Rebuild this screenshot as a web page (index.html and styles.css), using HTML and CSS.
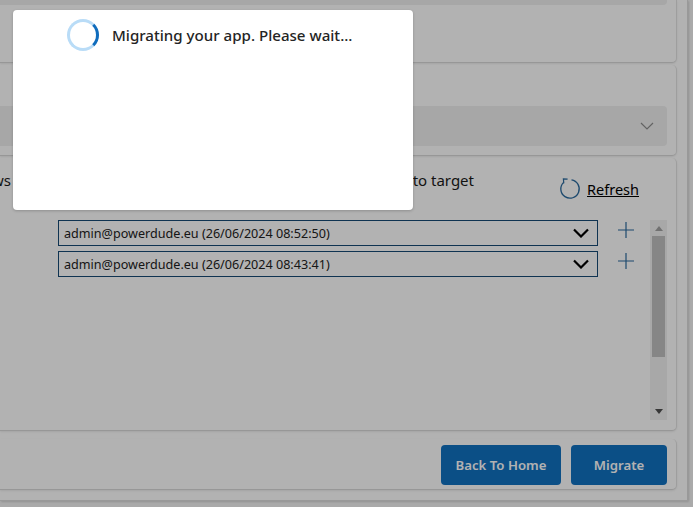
FILE: index.html
```html
<!DOCTYPE html>
<html lang="en">
<head>
    <meta charset="UTF-8">
    <meta name="viewport" content="width=device-width, initial-scale=1.0">
    <title>Migrate App</title>
    <link rel="stylesheet" href="styles.css">
</head>
<body>
    <div class="panel">
        <div class="card card-top">
            <div class="field field-top"></div>
        </div>
        <div class="card card-env">
            <div class="field field-env">
                <svg class="chevron-sm" width="14" height="8" viewBox="0 0 14 8"><path d="M1 1l6 6 6-6" fill="none" stroke="#8f8f8f" stroke-width="1.2"/></svg>
            </div>
        </div>
        <div class="card card-owners">
            <div class="owners-head">
                <div class="owners-note">
                    <span class="note-start">ws</span>
                    <span class="note-end">to target</span>
                </div>
                <a class="refresh" href="#">
                    <svg width="22" height="22" viewBox="0 0 22 22"><path d="M4.6 4.4A9.2 9.2 0 1 0 12.5 1.9" fill="none" stroke="#2a6a9e" stroke-width="1.3"/><path d="M8.6 1.2L4.4 .8 4.8 5.4" fill="none" stroke="#2a6a9e" stroke-width="1.2"/></svg>
                    <span>Refresh</span>
                </a>
            </div>
            <div class="owners-body">
                <div class="owners-list">
                    <div class="owner-row">
                        <div class="owner-select">
                            <span>admin@powerdude.eu (26/06/2024 08:52:50)</span>
                            <svg width="16" height="10" viewBox="0 0 16 10"><path d="M1 1.5l7 7 7-7" fill="none" stroke="#000" stroke-width="2.2"/></svg>
                        </div>
                        <svg class="plus" width="16" height="16" viewBox="0 0 16 16"><path d="M8 0v16M0 8h16" stroke="#2a6a9e" stroke-width="1.2"/></svg>
                    </div>
                    <div class="owner-row">
                        <div class="owner-select">
                            <span>admin@powerdude.eu (26/06/2024 08:43:41)</span>
                            <svg width="16" height="10" viewBox="0 0 16 10"><path d="M1 1.5l7 7 7-7" fill="none" stroke="#000" stroke-width="2.2"/></svg>
                        </div>
                        <svg class="plus" width="16" height="16" viewBox="0 0 16 16"><path d="M8 0v16M0 8h16" stroke="#2a6a9e" stroke-width="1.2"/></svg>
                    </div>
                </div>
                <div class="scrollbar">
                    <div class="arrow-up"></div>
                    <div class="thumb"></div>
                    <div class="arrow-down"></div>
                </div>
            </div>
        </div>
        <div class="card card-actions">
            <button class="btn btn-home">Back To Home</button>
            <button class="btn btn-migrate">Migrate</button>
        </div>
    </div>

    <div class="overlay"></div>
    <div class="modal">
        <div class="spinner"></div>
        <span class="modal-text">Migrating your app. Please wait...</span>
    </div>
</body>
</html>
```

FILE: styles.css
```css
/* Page behind the dialog */
html, body {
    height: 100%;
}
body {
    margin: 0;
    overflow: hidden;
    background-color: #f4f4f4;
    font-family: "Noto Sans", Arial, sans-serif;
    color: #1a1a1a;
}
.panel {
    box-sizing: border-box;
    width: 688px;
    height: 501px;
    padding-right: 10px;
    background: #fff;
    border-right: 1px solid #dcdcdc;
    border-bottom: 1px solid #dcdcdc;
    box-shadow: 1px 1px 2px rgba(0,0,0,0.15);
}
.card {
    box-sizing: border-box;
    background: #fff;
    border-right: 1px solid #e2e2e2;
    border-bottom: 1px solid #d8d8d8;
    border-radius: 0 0 5px 0;
    box-shadow: 0 1px 2px rgba(0,0,0,0.08);
}
.card-top {
    height: 63px;
    padding-right: 9px;
}
.field-top {
    height: 5px;
    background: #f0f0f0;
    border-radius: 0 0 4px 0;
}
.card-env {
    height: 91px;
    margin-top: 2px;
    padding: 41px 9px 0 0;
    border-radius: 0 5px 5px 0;
}
.field-env {
    display: flex;
    align-items: center;
    justify-content: flex-end;
    height: 40px;
    padding-right: 13px;
    background: #f0f0f0;
    border-radius: 0 4px 4px 0;
}
.card-owners {
    height: 273px;
    margin-top: 2px;
    padding-right: 9px;
    border-radius: 0 5px 5px 0;
}
.owners-head {
    display: flex;
    justify-content: space-between;
    height: 62px;
    padding-right: 28px;
    font-size: 15px;
}
.owners-note {
    display: flex;
    width: 474px;
    justify-content: space-between;
    padding-top: 12px;
}
.note-start {
    margin-left: -8px;
}
.refresh {
    display: flex;
    align-items: center;
    gap: 6px;
    height: 22px;
    margin-top: 20px;
    color: #000;
    font-size: 14.5px;
}
.owners-body {
    display: flex;
    justify-content: space-between;
    height: 200px;
}
.owners-list {
    display: flex;
    flex-direction: column;
    gap: 5px;
    padding-left: 58px;
}
.owner-row {
    display: flex;
    align-items: center;
    gap: 20px;
}
.owner-select {
    box-sizing: border-box;
    display: flex;
    align-items: center;
    justify-content: space-between;
    width: 540px;
    height: 26px;
    padding: 0 8px 0 5px;
    border: 1px solid #164a75;
    font-size: 12.6px;
    color: #222;
}
.plus {
    margin-bottom: 6px;
}
.scrollbar {
    display: flex;
    flex-direction: column;
    align-items: center;
    width: 17px;
    background: #f1f1f1;
}
.arrow-up {
    margin: 6px 0 5px;
    border: 4px solid transparent;
    border-top: 0;
    border-bottom: 5px solid #a3a3a3;
}
.thumb {
    width: 13px;
    height: 121px;
    background: #c1c1c1;
}
.arrow-down {
    margin-top: auto;
    margin-bottom: 6px;
    border: 4px solid transparent;
    border-bottom: 0;
    border-top: 5px solid #505050;
}
.card-actions {
    display: flex;
    justify-content: flex-end;
    gap: 10px;
    height: 51px;
    margin-top: 8px;
    padding: 6px 9px 0 0;
    border-radius: 0 5px 5px 0;
}
.btn {
    height: 40px;
    border: none;
    border-radius: 4px;
    background-color: #1071c1;
    color: #fff;
    font-family: inherit;
    font-size: 13.2px;
    font-weight: 600;
}
.btn-home {
    width: 120px;
}
.btn-migrate {
    width: 96px;
}

/* Loading dialog */
.overlay {
    position: absolute;
    inset: 0;
    background: rgba(0,0,0,0.3);
}
.modal {
    position: absolute;
    left: 13px;
    top: 10px;
    display: flex;
    align-items: flex-start;
    gap: 13px;
    box-sizing: border-box;
    width: 400px;
    height: 200px;
    padding: 9px 0 0 54px;
    background: #fff;
    border-radius: 4px;
    box-shadow: 0 1px 3px rgba(0,0,0,0.2);
}
.spinner {
    box-sizing: border-box;
    width: 32px;
    height: 32px;
    border: 3px solid #b9dcf7;
    border-right-color: #0f6cbd;
    border-radius: 50%;
}
.modal-text {
    margin-top: 6px;
    font-size: 15.1px;
    font-weight: 500;
    color: #242424;
}
```
